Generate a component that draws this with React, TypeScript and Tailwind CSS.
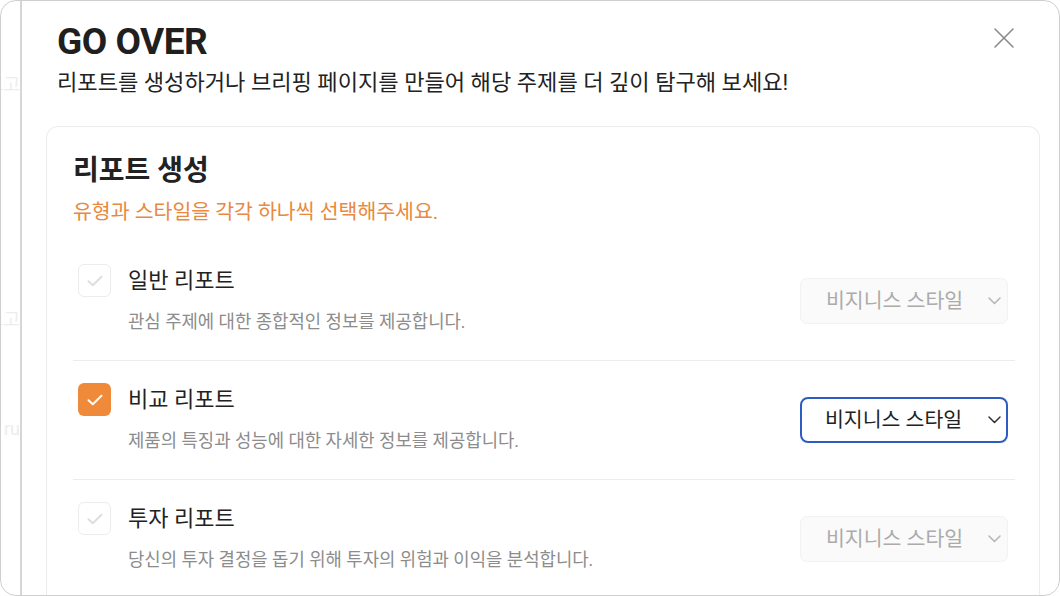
import React from "react";

const FONT = { fontFamily: 'Roboto, "Noto Sans CJK KR", "Noto Sans", sans-serif' };

function Check({ color }: { color: string }) {
  return (
    <svg width="16" height="12" viewBox="0 0 16 12" fill="none">
      <path d="M1.5 6.2 L5.8 10.2 L14.5 1.8" stroke={color} strokeWidth="2" strokeLinecap="round" strokeLinejoin="round" />
    </svg>
  );
}

function Chevron({ color }: { color: string }) {
  return (
    <svg width="13" height="8" viewBox="0 0 13 8" fill="none">
      <path d="M1 1 L6.5 6.5 L12 1" stroke={color} strokeWidth="1.5" strokeLinecap="round" strokeLinejoin="round" />
    </svg>
  );
}

type RowProps = { title: string; desc: string; active?: boolean; last?: boolean };

function Row({ title, desc, active, last }: RowProps) {
  return (
    <div className={`flex items-center pl-[5px] pr-[7px] pt-[22px] pb-[26px] ${last ? "" : "border-b border-[#ececec]"}`}>
      <div className="flex-1">
        <div className="flex items-center gap-[17px]">
          {active ? (
            <div className="w-[33px] h-[33px] rounded-[6px] bg-[#ee8a3a] flex items-center justify-center">
              <Check color="#ffffff" />
            </div>
          ) : (
            <div className="w-[33px] h-[33px] rounded-[6px] border border-[#ececec] bg-white flex items-center justify-center">
              <Check color="#dedede" />
            </div>
          )}
          <span className="text-[22px] leading-[33px] text-[#222222]">{title}</span>
        </div>
        <p className="mt-[13px] pl-[50px] text-[17.8px] leading-[24px] text-[#8c8c8c]">{desc}</p>
      </div>
      {active ? (
        <div className="mt-[4px] w-[208px] h-[46px] rounded-[8px] border-2 border-[#2d5dc2] bg-white flex items-center pl-[23px] pr-[5px]">
          <span className="flex-1 text-[20.5px] text-[#222222]">비지니스 스타일</span>
          <Chevron color="#333333" />
        </div>
      ) : (
        <div className="mt-[4px] w-[208px] h-[46px] rounded-[7px] border border-[#f2f2f2] bg-[#fafafa] flex items-center pl-[25px] pr-[6px]">
          <span className="flex-1 text-[20.5px] text-[#ababab]">비지니스 스타일</span>
          <Chevron color="#b5b5b5" />
        </div>
      )}
    </div>
  );
}

export default function App() {
  return (
    <div style={FONT} className="w-[1060px] h-[596px] overflow-hidden rounded-[16px] border border-[#cfcfcf] bg-white flex">
      <div className="w-[19px] shrink-0 overflow-hidden flex flex-col items-end text-[#ededed] text-[18px] whitespace-nowrap">
        <span className="mt-[70px]">보고</span>
        <span className="mt-[208px]">보고</span>
        <span className="mt-[82px]">ru</span>
      </div>
      <div className="flex-1 border-l-2 border-[#d6d6d6] flex flex-col">
        <div className="flex items-start pl-[35px] pr-[44px] pt-[22px]">
          <div className="flex-1">
            <h1 className="text-[37px] leading-[38px] font-bold text-[#1f1f1f] tracking-[-0.5px]">GO OVER</h1>
            <p className="mt-[6px] text-[22.1px] leading-[30px] text-[#222222]">
              리포트를 생성하거나 브리핑 페이지를 만들어 해당 주제를 더 깊이 탐구해 보세요!
            </p>
          </div>
          <svg width="22" height="22" viewBox="0 0 22 22" fill="none" className="mt-[4px]">
            <path d="M2 2 L20 20 M20 2 L2 20" stroke="#8a8a8a" strokeWidth="1.6" strokeLinecap="round" />
          </svg>
        </div>
        <div className="mt-[29px] ml-[24px] mr-[19px] flex-1 rounded-t-[12px] border border-b-0 border-[#ececec] pt-[26px] pl-[26px] pr-[24px]">
          <h2 className="text-[28px] leading-[36px] font-bold text-[#222222]">리포트 생성</h2>
          <p className="mt-[10px] text-[20.5px] leading-[27px] text-[#e8893f]">유형과 스타일을 각각 하나씩 선택해주세요.</p>
          <div className="mt-[16px]">
            <Row title="일반 리포트" desc="관심 주제에 대한 종합적인 정보를 제공합니다." />
            <Row title="비교 리포트" desc="제품의 특징과 성능에 대한 자세한 정보를 제공합니다." active />
            <Row title="투자 리포트" desc="당신의 투자 결정을 돕기 위해 투자의 위험과 이익을 분석합니다." last />
          </div>
        </div>
      </div>
    </div>
  );
}
